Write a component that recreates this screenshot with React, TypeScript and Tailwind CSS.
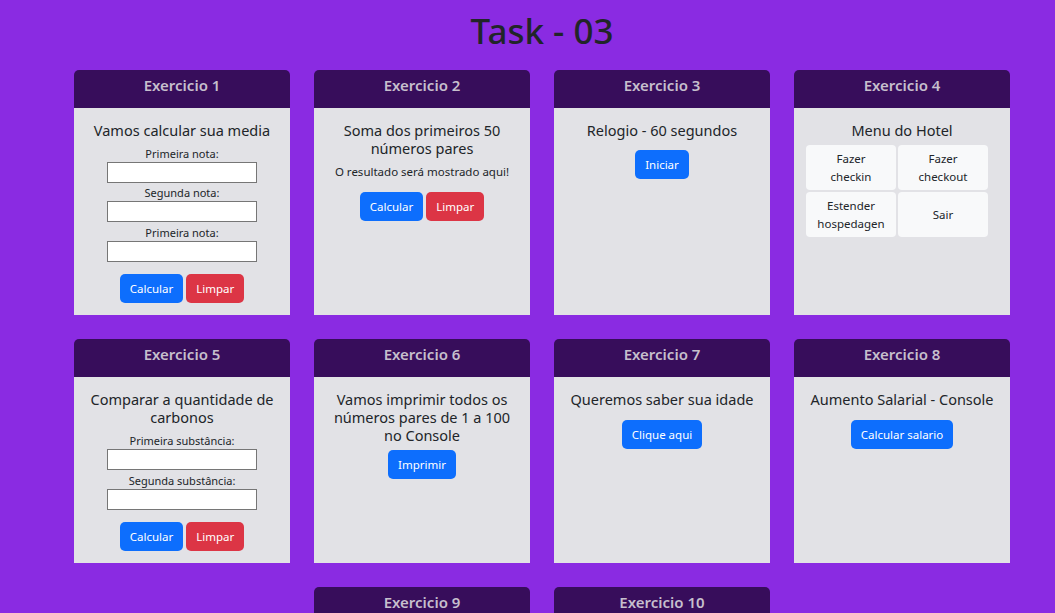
import React from "react";

const FONT = { fontFamily: '"Noto Sans", "Segoe UI", sans-serif' };

function Card({ title, children }: { title: string; children?: React.ReactNode }) {
  return (
    <div className="w-[216px] flex flex-col">
      <div className="h-[38px] pb-2 rounded-t-[5px] bg-[#370d5b] flex items-center justify-center text-[15px] font-semibold text-[#c6bfcd]">
        {title}
      </div>
      <div className="flex-1 bg-[#e2e2e6] px-3 pt-[13px] pb-3 flex flex-col items-center text-center text-[#212529]">
        {children}
      </div>
    </div>
  );
}

function CardTitle({ children, className = "" }: { children: React.ReactNode; className?: string }) {
  return <h5 className={`text-[14.5px] leading-[18px] font-normal ${className}`}>{children}</h5>;
}

function Btn({ color, children }: { color: "blue" | "red"; children: React.ReactNode }) {
  return (
    <button
      className={`h-[29px] px-[10px] rounded-[5px] text-[11.5px] text-white ${
        color === "blue" ? "bg-[#0d6efd]" : "bg-[#dc3545]"
      }`}
    >
      {children}
    </button>
  );
}

function Field({ label, gap = "mb-[3px]" }: { label: string; gap?: string }) {
  return (
    <div className={`flex flex-col items-center ${gap}`}>
      <label className="text-[11px] leading-[14px]">{label}</label>
      <input className="mt-px w-[150px] h-[21px] bg-white border border-[#767676]" />
    </div>
  );
}

function MenuBtn({ children }: { children: React.ReactNode }) {
  return (
    <button className="h-[45px] rounded-[4px] bg-[#f8f9fa] text-[11.5px] leading-[18px] text-[#212529]">
      {children}
    </button>
  );
}

export default function App() {
  return (
    <div className="h-screen w-full bg-[#8a2be2] pl-[29px] overflow-hidden" style={FONT}>
      {/* Header */}
      <h1 className="text-center text-[35px] leading-[48px] font-medium text-[#212529] pt-[7px] mb-[15px]">
        Task - 03
      </h1>

      <div className="flex flex-col items-center gap-6">
        {/* Row 1 */}
        <div className="grid grid-cols-4 gap-6">
          <Card title="Exercicio 1">
            <CardTitle className="mb-2">Vamos calcular sua media</CardTitle>
            <Field label="Primeira nota:" />
            <Field label="Segunda nota:" gap="mb-[4px]" />
            <Field label="Primeira nota:" gap="mb-3" />
            <div className="flex gap-[3px]">
              <Btn color="blue">Calcular</Btn>
              <Btn color="red">Limpar</Btn>
            </div>
          </Card>

          <Card title="Exercicio 2">
            <CardTitle className="mb-2 px-4">Soma dos primeiros 50 números pares</CardTitle>
            <p className="text-[11.5px] leading-[14px] mb-[13px]">O resultado será mostrado aqui!</p>
            <div className="flex gap-[3px]">
              <Btn color="blue">Calcular</Btn>
              <Btn color="red">Limpar</Btn>
            </div>
          </Card>

          <Card title="Exercicio 3">
            <CardTitle className="mb-[11px]">Relogio - 60 segundos</CardTitle>
            <Btn color="blue">Iniciar</Btn>
          </Card>

          <Card title="Exercicio 4">
            <CardTitle className="mb-[6px]">Menu do Hotel</CardTitle>
            <div className="grid grid-cols-2 gap-[2px] w-[182px] self-start">
              <MenuBtn>
                Fazer
                <br />
                checkin
              </MenuBtn>
              <MenuBtn>
                Fazer
                <br />
                checkout
              </MenuBtn>
              <MenuBtn>
                Estender
                <br />
                hospedagen
              </MenuBtn>
              <MenuBtn>Sair</MenuBtn>
            </div>
          </Card>
        </div>

        {/* Row 2 */}
        <div className="grid grid-cols-4 gap-6">
          <Card title="Exercicio 5">
            <CardTitle className="mb-2">Comparar a quantidade de carbonos</CardTitle>
            <Field label="Primeira substância:" gap="mb-[4px]" />
            <Field label="Segunda substância:" gap="mb-3" />
            <div className="flex gap-[3px]">
              <Btn color="blue">Calcular</Btn>
              <Btn color="red">Limpar</Btn>
            </div>
          </Card>

          <Card title="Exercicio 6">
            <CardTitle className="mb-[6px]">
              Vamos imprimir todos os
              <br />
              números pares de 1 a 100
              <br />
              no Console
            </CardTitle>
            <Btn color="blue">Imprimir</Btn>
          </Card>

          <Card title="Exercicio 7">
            <CardTitle className="mb-3 whitespace-nowrap">Queremos saber sua idade</CardTitle>
            <Btn color="blue">Clique aqui</Btn>
          </Card>

          <Card title="Exercicio 8">
            <CardTitle className="mb-3 whitespace-nowrap">Aumento Salarial - Console</CardTitle>
            <Btn color="blue">Calcular salario</Btn>
          </Card>
        </div>

        {/* Row 3 */}
        <div className="flex gap-6">
          <Card title="Exercicio 9" />
          <Card title="Exercicio 10" />
        </div>
      </div>
    </div>
  );
}
